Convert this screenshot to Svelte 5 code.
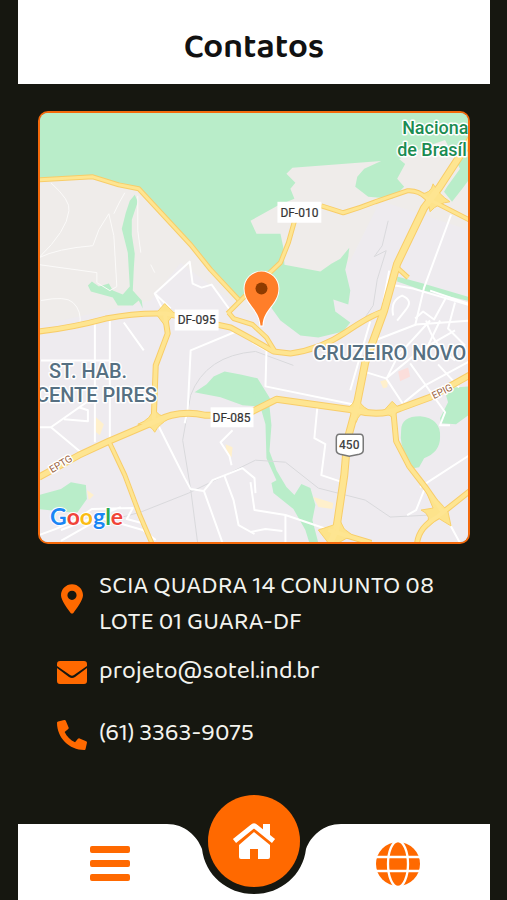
<script>
  const contacts = [
    { kind: 'pin', text: 'SCIA QUADRA 14 CONJUNTO 08 LOTE 01 GUARA-DF', href: '#mapa' },
    { kind: 'mail', text: 'projeto@sotel.ind.br', href: 'mailto:projeto@sotel.ind.br' },
    { kind: 'phone', text: '(61) 3363-9075', href: 'tel:+556133639075' }
  ];

  const parks = [
    'M38 111H471V176L463 187L452 201L444 191L447 186L460 168L445 139L425 146L399 158L405 163L397 178L404 186L392 198L368 196L355 186L357 176L364 168L381 160L292 167L286 173L295 182L290 188L294 198L277 205L250 220L256 233L280 233L283 247L284 264L300 267L320 271L331 263L340 258L349 247L348 256L345 269L350 290L348 304L333 299L335 311L350 322L343 331L318 337L300 335L280 320L262 295L244 298L238 298L139 188L90 177L38 179Z',
    'M134 194L137 201L131 219L131 234L134 253L133 268L132 290L141 300L142 308L138 300L132 305L117 305L112 297L90 291L87 285L91 281L98 286L108 283L112 290L122 294L129 286L127 252L124 240L121 228L125 212L129 200Z',
    'M194 392L206 384L213 376L224 371L240 374L257 378L262 386L270 399L257 406L242 405L220 397L199 393Z',
    'M250 386L261 387L268 396L271 425L269 451L276 470L286 487L294 495L301 484L310 488L315 505L312 520L318 543H309L305 530L293 509L273 493L271 483L276 480L266 458L265 424L260 407Z',
    'M38 495L60 489L70 482L85 485L86 499L76 513L38 509Z',
    'M444 388L448 402L440 418L441 423L456 424L471 413V386Z',
    'M401 430Q401 416 420 416Q441 418 440 437Q440 452 424 458L419 467L413 468L407 457Q399 445 401 430Z',
    'M397 276L423 283L471 297V301L423 290L397 281Z'
  ];

  const paths = [
    'M50 182Q70 200 68 210Q66 230 38 257Q56 248 92 245L98 229L108 213L113 235L116 286L109 290L96 282V272L38 264',
    'M124 192Q119 200 113 213M137 195V230L140 252M40 300Q65 295 72 302Q81 310 79 325M150 264L154 272'
  ];

  const minor = [
    'M94 323V442M109 320V440M38 427H50L94 396M50 427L80 452M63 419L87 421L87 410L78 407M40 360H108M123 322L143 350',
    'M180 318L162 309L154 293L189 261L192 283L201 287L211 284L229 309M154 293L170 308',
    'M184 423L187 410L190 350L238 330M158 426L170 450L184 478L190 489L203 491L212 480L242 468L254 478L255 493M203 490L222 543M224 476L233 500L238 525L254 534M231 465L229 456L220 442L232 430',
    'M252 342L266 350L265 386L357 405L372 415M317 407L314 438L325 444L321 475L342 482M250 482L254 510L285 515L335 532M285 515V543M250 532L265 529L282 531',
    'M389 270L378 329M389 284L413 288L471 305M451 214L424 287L415 325M430 290L471 304M370 321L350 390',
    'M377 339L416 324L471 320M363 371L386 378L403 404M386 378L420 350L455 330M410 363L445 412L440 425L450 425M386 379L398 355L430 320M426 320Q433 345 455 360M438 364L459 387M404 402L425 385L471 360M420 487L471 454M424 490L416 510L407 515M442 510L460 543',
    'M393 315Q390 300 402 295Q414 300 405 310L397 320M446 297L434 319L423 311L415 318M440 320L428 345M455 302L448 328L465 345',
    'M38 535Q70 525 91 509L132 508L126 519L141 523M60 541L100 518L142 530L155 540M60 530L120 507'
  ];

  const rails = [
    'M388 220L382 245L374 256L386 250L377 279L373 305L362 321M197 543L190 489L182 440L190 395Q205 355 255 351L293 365M100 523L140 512L188 493L255 460L285 462L318 488L365 500L390 517L430 515'
  ];

  const roads = [
    { d: 'M38 179L92 176L118 184L138 188L190 244L210 269L238 299', w: 4 },
    { d: 'M38 331Q72 327 105 318Q135 312 165 313L230 327L252 339L273 351L290 353Q320 349 345 332Q370 315 383 311', w: 5 },
    { d: 'M227 313L246 294L262 279L280 262L288 242L295 217', w: 4 },
    { d: 'M228 312L233 318L252 324L266 337L274 350', w: 4 },
    { d: 'M321 205L343 212Q360 207 375 201L407 190Q418 189 426 197L471 220', w: 4 },
    { d: 'M164 313L167 333L155 365L153 419', w: 5 },
    { d: 'M38 477L78 455L108 441L155 421Q178 409 205 415L244 415L276 399L355 410Q380 417 400 408L430 397L471 374', w: 6 },
    { d: 'M108 441L124 475L139 515L151 543', w: 4 },
    { d: 'M471 138L439 187L424 207L397 263L384 310L365 362L356 407L347 440L344 475L336 529L330 543', w: 7 },
    { d: 'M393 409L396 441L409 466L426 488L442 511', w: 5 },
    { d: 'M417 543Q419 527 437 517L471 490', w: 5 },
    { d: 'M328 530L371 543', w: 5 },
    { d: 'M397 267L408 277', w: 4 }
  ];

  const junctions = [
    'M164 303L174 313L164 325L155 313Z',
    'M153 407Q156 416 169 418Q158 424 154 432Q150 424 137 424Q151 419 153 407Z',
    'M433 183Q439 194 450 201Q438 202 430 211Q429 200 420 193Q431 193 433 183Z',
    'M356 394Q359 405 369 410Q358 413 356 422Q353 412 344 409Q354 406 356 394Z',
    'M392 401L400 409L392 417L383 411Z',
    'M425 489Q440 501 448 512L451 526L438 518L426 529Q433 515 421 510L433 508Z',
    'M337 515L344 529L352 535L338 543H328L318 530L333 525Z'
  ];
</script>

<main>
  <header><h1>Contatos</h1></header>

  <section class="map" id="mapa">
    <svg viewBox="39 112 429 430" role="img" aria-label="Mapa do endereço">
      <rect x="38" y="111" width="433" height="433" fill="#efecea" />
      <path d="M38 325L150 300L180 262L250 315L350 260L380 200L471 230V543H38Z" fill="#eeebef" />
      <g fill="#b9edc9">
        {#each parks as d}<path {d} />{/each}
      </g>
      <g fill="#fff0cc">
        <path d="M95 417L103 424L99 435L94 431ZM313 497L333 503L332 509L318 507ZM225 444L232 447L231 457L226 453ZM380 381L388 379L387 387L383 388ZM86 490L93 495L88 500Z" />
      </g>
      <path d="M398 371L408 367L410 376L400 381Z" fill="#fbdedb" />
      <g class="rail">{#each rails as d}<path {d} />{/each}</g>
      <g class="track">{#each paths as d}<path {d} />{/each}</g>
      <g class="minor">{#each minor as d}<path {d} />{/each}</g>
      <g class="casing">
        {#each roads as r}<path d={r.d} stroke-width={r.w + 1} />{/each}
      </g>
      <g fill="#fde38b" stroke="#f8d06b">
        {#each junctions as d}<path {d} />{/each}
      </g>
      <g class="road">
        {#each roads as r}<path d={r.d} stroke-width={r.w - 1} />{/each}
      </g>

      <g fill="#fff">
        <rect x="277" y="201" width="44" height="21" />
        <rect x="174" y="309" width="44" height="21" />
        <rect x="210" y="407" width="43" height="20" />
      </g>
      <g class="route">
        <text x="299" y="216">DF-010</text>
        <text x="196" y="324">DF-095</text>
        <text x="231" y="422">DF-085</text>
      </g>
      <path d="M339 434H360Q363 434 363 438V450Q363 453 359 454L349 456L340 454Q336 453 336 450V438Q336 434 339 434Z" fill="#fff" stroke="#777" stroke-width="1.5" />
      <text class="shield" x="349" y="449">450</text>

      <g class="park">
        <text x="402" y="133">Naciona</text>
        <text x="397" y="155">de Brasíl</text>
      </g>
      <g class="district">
        <text x="48" y="378">ST. HAB.</text>
        <text x="156" y="402" text-anchor="end">CENTE PIRES</text>
        <text x="313" y="360">CRUZEIRO NOVO</text>
      </g>
      <g class="avenue">
        <text transform="translate(51 473) rotate(-31)">EPTG</text>
        <text transform="translate(434 399) rotate(-27)">EPIG</text>
      </g>

      <path class="marker" d="M260 325C259 308 244 304 244 288A17 17 0 0 1 278 288C278 304 263 308 262 325Z" />
      <circle cx="261" cy="288" r="6" fill="#8f3b00" />

      <text class="google" x="49" y="525"><tspan fill="#1a86f5">G</tspan><tspan fill="#f04438">o</tspan><tspan fill="#fbbc14">o</tspan><tspan fill="#1a86f5">g</tspan><tspan fill="#2eac52">l</tspan><tspan fill="#f04438">e</tspan></text>
    </svg>
  </section>

  <address>
    {#each contacts as c}
      <a class={c.kind} href={c.href}>
        <span class="icon">
          {#if c.kind === 'pin'}
            <svg viewBox="0 0 384 512" width="22" height="30" aria-hidden="true"><path d="M215.7 499.2C267 435 384 279.4 384 192C384 86 298 0 192 0S0 86 0 192c0 87.4 117 243 168.3 307.2c12.3 15.3 35.1 15.3 47.4 0zM192 112a80 80 0 1 1 0 160 80 80 0 1 1 0-160z" /></svg>
          {:else if c.kind === 'mail'}
            <svg viewBox="0 0 30 23" width="30" height="23" aria-hidden="true"><path d="M3 0H27Q30 0 30 3V5L17 14Q15 15.500 13 14L0 5V3Q0 0 3 0ZM0 7L12 16Q15 18 18 16L30 7V20Q30 23 27 23H3Q0 23 0 20Z" /></svg>
          {:else}
            <svg viewBox="0 0 512 512" width="30" height="30" aria-hidden="true"><path transform="matrix(-1 0 0 1 512 0)" d="M493.4 24.6l-104-24c-11.3-2.6-22.9 3.3-27.5 13.900l-48 112c-4.200 9.800-1.400 21.300 6.900 28l60.600 49.600c-36 76.700-98.900 140.500-177.200 177.200l-49.600-60.600c-6.800-8.300-18.200-11.100-28-6.900l-112 48C3.900 366.500-2 378.100.6 389.400l24 104C27.100 504.200 36.700 512 48 512c256.100 0 464-207.500 464-464 0-11.200-7.700-20.900-18.600-23.400z" /></svg>
          {/if}
        </span>
        <span>{c.text}</span>
      </a>
    {/each}
  </address>

  <nav>
    <div class="side left">
      <button aria-label="Menu">
        <svg viewBox="0 0 44 44" width="44" height="44" aria-hidden="true"><path d="M4 4H40Q42 4 42 6V9Q42 11 40 11H4Q2 11 2 9V6Q2 4 4 4ZM4 18H40Q42 18 42 20V23Q42 25 40 25H4Q2 25 2 23V20Q2 18 4 18ZM4 32H40Q42 32 42 34V37Q42 39 40 39H4Q2 39 2 37V34Q2 32 4 32Z" /></svg>
      </button>
    </div>
    <svg class="notch" viewBox="0 0 174 76" width="174" height="76" aria-hidden="true"><path d="M0 0C18 0 30 12 35 25C38 51 60 70 87 70C114 70 136 51 139 25C144 12 156 0 174 0V76H0Z" fill="#fff" /></svg>
    <div class="side right">
      <a href="#site" aria-label="Site">
        <svg viewBox="0 0 44 44" width="44" height="44" aria-hidden="true">
          <circle cx="22" cy="22" r="22" />
          <g fill="none" stroke="#fff" stroke-width="2.300"><ellipse cx="22" cy="22" rx="10" ry="23" /><path d="M0 15H44M0 29H44" /></g>
        </svg>
      </a>
    </div>
    <button class="home" aria-label="Início">
      <svg viewBox="0 0 44 36" width="44" height="36" aria-hidden="true">
        <path d="M2.500 18L20 4Q22 2 24 4L41.500 18" fill="none" stroke="#fff" stroke-width="5" />
        <path d="M31 1H38V15L31 10ZM22 9L38 22V34Q38 36 36 36H26V26H18V36H9Q7 36 7 34V22Z" />
      </svg>
    </button>
  </nav>
</main>

<style>
  :global(body) {
    margin: 0;
    background: #161710;
  }
  main {
    box-sizing: border-box;
    min-height: 100vh;
    padding: 0 17px 0 18px;
    display: flex;
    flex-direction: column;
    background: #161710;
    font-family: "Baloo 2", "Noto Sans", sans-serif;
  }
  header {
    height: 84px;
    display: flex;
    align-items: center;
    justify-content: center;
    background: #fff;
  }
  h1 {
    margin: 0;
    padding-top: 10px;
    font-size: 35px;
    font-weight: 600;
    line-height: 40px;
    color: #111;
  }
  .map {
    margin: 27px 20px 0;
    border: 2px solid #f4690b;
    border-radius: 10px;
    overflow: hidden;
  }
  .map svg {
    display: block;
    width: 100%;
    font-family: Roboto, sans-serif;
  }
  .rail, .track, .minor, .casing, .road {
    fill: none;
    stroke-linejoin: round;
  }
  .rail { stroke: #d9d9dc; stroke-width: 1; }
  .track { stroke: #fbfaf9; stroke-width: 1; }
  .minor { stroke: #fff; stroke-width: 2; }
  .casing { stroke: #f8cd69; }
  .road { stroke: #fee591; }
  .route {
    font-size: 12px;
    fill: #333;
    stroke: #333;
    stroke-width: 0.2px;
    text-anchor: middle;
  }
  .shield {
    font-size: 12px;
    font-weight: 500;
    fill: #444;
    text-anchor: middle;
  }
  .park, .district, .avenue {
    paint-order: stroke;
    stroke: #fff;
    stroke-width: 3px;
    stroke-linejoin: round;
  }
  .park { font-size: 18px; font-weight: 500; fill: #1b8c52; }
  .district { font-size: 20px; font-weight: 500; fill: #567082; }
  .avenue { font-size: 10px; fill: #99603a; }
  .marker {
    fill: #ff7e29;
    stroke: #fff;
    stroke-width: 2px;
    paint-order: stroke;
  }
  .google {
    font-family: Lato, sans-serif;
    font-size: 23px;
    font-weight: 700;
    paint-order: stroke;
    stroke: #fff;
    stroke-width: 2px;
  }
  address {
    margin: 24px 20px 0 39px;
    display: flex;
    flex-direction: column;
    font-style: normal;
  }
  address a {
    display: grid;
    grid-template-columns: 30px 1fr;
    column-gap: 12px;
    align-items: center;
    color: #f3f3ee;
    font-size: 25px;
    line-height: 36px;
    text-decoration: none;
  }
  .mail { margin-top: 13px; }
  .phone { margin-top: 26px; }
  .icon {
    display: flex;
    justify-content: center;
    fill: #ff6900;
  }
  .pin .icon { padding-bottom: 10px; }
  .mail .icon, .phone .icon { padding-top: 4px; }
  nav {
    position: relative;
    display: flex;
    height: 76px;
    margin-top: auto;
  }
  .side {
    flex: 1;
    display: flex;
    align-items: center;
    background: #fff;
    padding: 4px 35px 0;
    fill: #ff6900;
  }
  .left { justify-content: flex-end; }
  button {
    padding: 0;
    border: 0;
    background: none;
    fill: inherit;
  }
  .side svg, .home svg, .notch, .icon svg { display: block; }
  .home {
    position: absolute;
    top: -29px;
    left: 50%;
    width: 92px;
    height: 92px;
    margin-left: -46px;
    display: flex;
    align-items: center;
    justify-content: center;
    border-radius: 50%;
    background: #ff6900;
    fill: #fff;
  }
</style>
